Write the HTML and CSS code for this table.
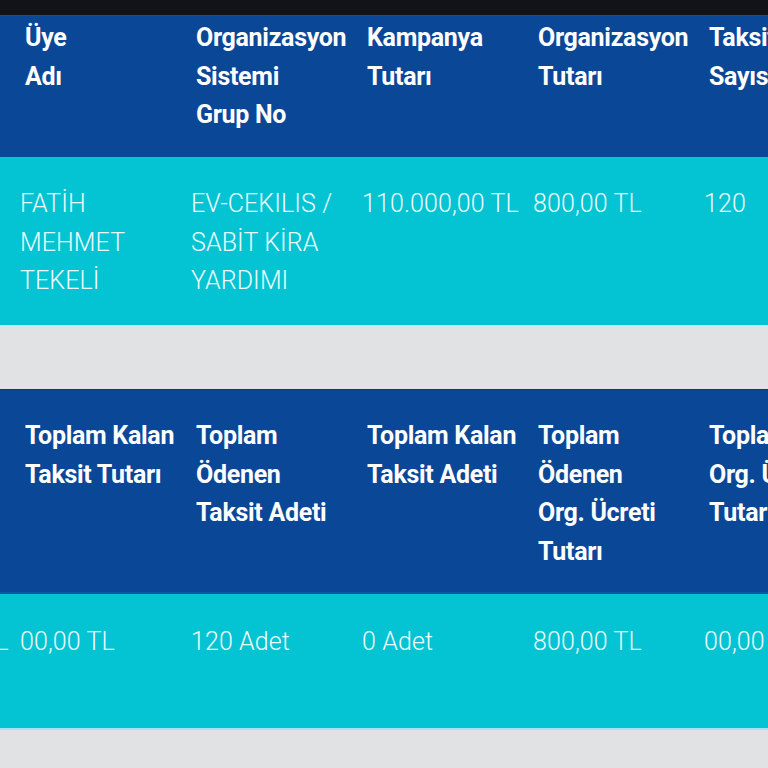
FILE: index.html
```html
<!DOCTYPE html>
<html lang="tr">
<head>
<meta charset="utf-8">
<title>Üye Bilgileri</title>
<link rel="stylesheet" href="styles.css">
</head>
<body>
<div class="statusbar"></div>
<section class="table t1">
  <div class="row head">
    <div class="cell">Üye<br>Adı</div>
    <div class="cell">Organizasyon<br>Sistemi<br>Grup No</div>
    <div class="cell">Kampanya<br>Tutarı</div>
    <div class="cell">Organizasyon<br>Tutarı</div>
    <div class="cell">Taksit<br>Sayısı</div>
  </div>
  <div class="row body">
    <div class="cell">FATİH<br>MEHMET<br>TEKELİ</div>
    <div class="cell">EV-CEKILIS /<br>SABİT KİRA<br>YARDIMI</div>
    <div class="cell">110.000,00 TL</div>
    <div class="cell">800,00 TL</div>
    <div class="cell">120</div>
  </div>
</section>
<div class="gap"></div>
<section class="table t2">
  <div class="scroller">
    <div class="row head">
      <div class="cell">Toplam<br>Taksit</div>
      <div class="cell">Toplam Kalan<br>Taksit Tutarı</div>
      <div class="cell">Toplam<br>Ödenen<br>Taksit Adeti</div>
      <div class="cell">Toplam Kalan<br>Taksit Adeti</div>
      <div class="cell">Toplam<br>Ödenen<br>Org. Ücreti<br>Tutarı</div>
      <div class="cell">Toplam Kalan<br>Org. Ücreti<br>Tutarı</div>
    </div>
    <div class="row body">
      <div class="cell lead">110.000,00 TL</div>
      <div class="cell">00,00 TL</div>
      <div class="cell">120 Adet</div>
      <div class="cell">0 Adet</div>
      <div class="cell">800,00 TL</div>
      <div class="cell">00,00 TL</div>
    </div>
  </div>
</section>
<div class="gap bottom"></div>
</body>
</html>
```
FILE: styles.css
```css
html, body {
  margin: 0;
  padding: 0;
  background: #e1e2e4;
  overflow: hidden;
  width: 768px;
  height: 768px;
}
body {
  font-family: Roboto, "Liberation Sans", sans-serif;
  color: #ffffff;
}
.statusbar {
  height: 15px;
  background: #121319;
  border-bottom: 1px solid #3a4a5a;
}
.table {
  overflow: hidden;
  width: 768px;
}
.row {
  display: grid;
  grid-template-columns: repeat(5, 171px);
  width: max-content;
}
.t2 .row {
  grid-template-columns: repeat(6, 171px);
}
.scroller {
  margin-left: -171px;
}
.cell {
  font-size: 25px;
  line-height: 38.5px;
  white-space: nowrap;
}
.head {
  background: #0b4797;
}
.head .cell {
  font-weight: 700;
  letter-spacing: -0.3px;
  padding: 3px 0 0 25px;
}
.t1 .head {
  height: 141px;
  box-sizing: border-box;
}
.body {
  background: #04c3d2;
}
.body .cell {
  font-weight: 300;
  color: #ecfdff;
  letter-spacing: 0.1px;
  padding: 28px 0 0 20px;
}
.body .cell.lead {
  padding-left: 23px;
}
.t1 .body {
  height: 168px;
  box-sizing: border-box;
}
.gap {
  height: 62px;
  border-top: 2px solid #d4e8ef;
}
.t2 .head {
  height: 203px;
  box-sizing: border-box;
  border-top: 1px solid #083a7c;
}
.t2 .head .cell {
  padding-top: 27px;
}
.t2 .body {
  height: 138px;
  box-sizing: border-box;
  border-top: 2px solid #0a5aa0;
  border-bottom: 2px solid #9ee7ee;
}
.t2 .body .cell {
  padding-top: 29px;
}
.gap.bottom {
  border-top: none;
  height: 38px;
}
```
